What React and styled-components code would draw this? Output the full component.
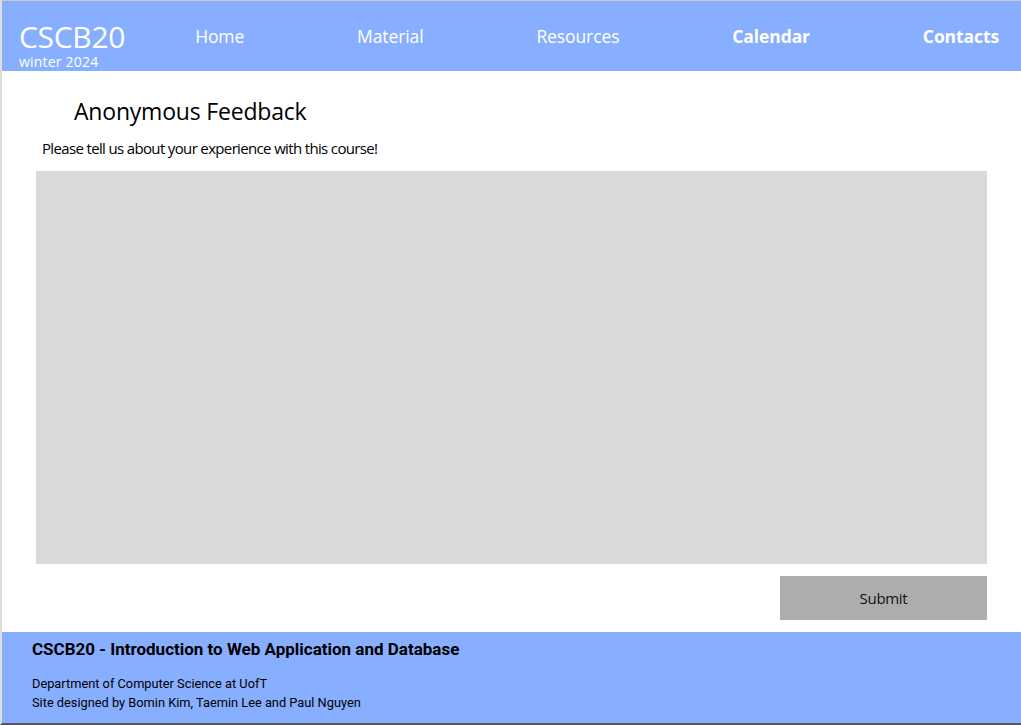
import React from "react";
import styled, { createGlobalStyle } from "styled-components";

const GlobalStyle = createGlobalStyle`
    html, body {
        margin: 0;
        padding: 0;
        background: #ffffff;
    }
    * {
        box-sizing: border-box;
    }
`

const Page = styled.div`
    width: 1021px;
    height: 725px;
    display: flex;
    flex-direction: column;
    border-top: 1px solid #c9c9c9;
    border-left: 2px solid #dedede;
    border-bottom: 2px solid #5a5a5a;
    font-family: "Open Sans", "Noto Sans", sans-serif;
    overflow: hidden;
`

const Header = styled.header`
    height: 70px;
    background-color: #88afff;
    display: flex;
    align-items: center;
    padding: 0 22px 0 17px;
    color: white;
`

const Brand = styled.div`
    display: flex;
    flex-direction: column;
    margin-top: 18px;

    .brand-title {
        font-size: 30px;
        line-height: 34px;
        letter-spacing: -0.3px;
    }

    .brand-sub {
        font-size: 14px;
        line-height: 16px;
        letter-spacing: 0.2px;
    }
`

const Nav = styled.nav`
    flex: 1;
    display: flex;
    justify-content: space-between;
    margin-left: 70px;
`

const NavLink = styled.a`
    color: white;
    font-size: 17.5px;
    font-weight: ${props => props.$bold ? 700 : 500};
    letter-spacing: -0.1px;
    text-decoration: none;
`

const Main = styled.main`
    flex: 1;
    display: flex;
    flex-direction: column;
    padding: 0 34px 0 34px;
`

const Title = styled.h1`
    margin: 24px 0 0 38px;
    font-size: 23px;
    font-weight: 400;
    letter-spacing: -0.2px;
    color: #000;
    line-height: 32px;
`

const Prompt = styled.p`
    margin: 11px 0 0 6px;
    font-size: 15px;
    letter-spacing: -0.65px;
    color: #000;
    line-height: 21px;
`

const FeedbackBox = styled.textarea`
    margin-top: 12px;
    height: 393px;
    width: 100%;
    background-color: #d9d9d9;
    border: none;
    resize: none;
    outline: none;
    font-family: inherit;
`

const Actions = styled.div`
    display: flex;
    justify-content: flex-end;
    margin-top: 12px;
`

const SubmitButton = styled.button`
    width: 207px;
    height: 44px;
    background-color: #adadad;
    border: none;
    font-family: "Open Sans", sans-serif;
    font-size: 15px;
    letter-spacing: -0.3px;
    color: #111;
`

const Footer = styled.footer`
    height: 91px;
    background-color: #88afff;
    padding: 6px 30px 0 30px;
    font-family: Roboto, "Liberation Sans", sans-serif;
    color: #000;

    .footer-title {
        margin: 0;
        font-size: 17px;
        font-weight: 700;
        line-height: 22px;
    }

    .footer-lines {
        margin-top: 14px;
    }

    .footer-line {
        margin: 0;
        font-size: 12.8px;
        line-height: 19px;
    }
`

export default function App() {
    return (
        <>
            <GlobalStyle />
            <Page>
                <Header>
                    <Brand>
                        <span className="brand-title">CSCB20</span>
                        <span className="brand-sub">winter 2024</span>
                    </Brand>
                    <Nav>
                        <NavLink href="#">Home</NavLink>
                        <NavLink href="#">Material</NavLink>
                        <NavLink href="#">Resources</NavLink>
                        <NavLink href="#" $bold>Calendar</NavLink>
                        <NavLink href="#" $bold>Contacts</NavLink>
                    </Nav>
                </Header>
                <Main>
                    <Title>Anonymous Feedback</Title>
                    <Prompt>Please tell us about your experience with this course!</Prompt>
                    <FeedbackBox />
                    <Actions>
                        <SubmitButton>Submit</SubmitButton>
                    </Actions>
                </Main>
                <Footer>
                    <h3 className="footer-title">CSCB20 - Introduction to Web Application and Database</h3>
                    <div className="footer-lines">
                        <p className="footer-line">Department of Computer Science at UofT</p>
                        <p className="footer-line">Site designed by Bomin Kim, Taemin Lee and Paul Nguyen</p>
                    </div>
                </Footer>
            </Page>
        </>
    );
}
